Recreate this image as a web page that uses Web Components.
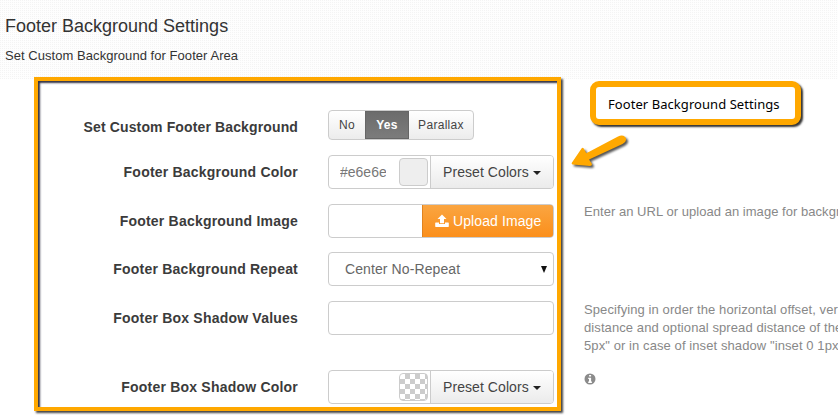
<!DOCTYPE html>
<html lang="en"><head><meta charset="utf-8"><title>Footer Background Settings</title>
<style>
html,body{margin:0;width:838px;height:415px;overflow:hidden;background:#fff;font-family:"Liberation Sans",Arial,sans-serif;color:#444}
body{position:relative}
</style></head><body>
<settings-page></settings-page>
<script>
const define=(name,html)=>{
  const t=document.createElement('template');t.innerHTML=html;
  customElements.define(name,class extends HTMLElement{
    constructor(){super();this.attachShadow({mode:'open'}).appendChild(t.content.cloneNode(true));}
  });
};
define('page-header',`<style>
:host{display:block;box-sizing:border-box;height:79px;padding:14px 0 0 5px;background:radial-gradient(circle at .5px .5px,#f4f4f4 .7px,transparent .8px) 0 2px/2px 2px,#fefefe}
h1{margin:0;font:400 18px/24px "Liberation Sans",Arial,sans-serif;color:#333;letter-spacing:0}
p{margin:8px 0 0;font-size:13px;line-height:20px;color:#333;letter-spacing:.05px}
</style><h1><slot name="title"></slot></h1><p><slot></slot></p>`);
define('setting-row',`<style>
:host{display:grid;grid-template-columns:298px 226px 1fr;grid-template-rows:34px;column-gap:30px;height:34px;align-items:center}
label{text-align:right;font-weight:700;font-size:14px;line-height:20px;color:#3b3b3b;letter-spacing:var(--label-track,.21px);white-space:nowrap;padding-top:var(--label-drop,0)}
.control{height:34px}
.help{align-self:start;white-space:nowrap;font-size:13px;line-height:18px;color:#888;letter-spacing:var(--help-track,.09px)}
</style><label><slot name="label"></slot></label><div class="control"><slot></slot></div><div class="help"><slot name="help"></slot></div>`);
define('button-group',`<style>
:host{display:inline-flex;box-sizing:border-box;height:30px;margin-top:2px;border:1px solid #ccc;border-radius:4px;overflow:hidden;background:linear-gradient(#fff,#ececec);font-size:12px;color:#444;vertical-align:top}
::slotted(span){display:flex;align-items:center;justify-content:center;width:36px;letter-spacing:.3px;padding-bottom:1px;box-sizing:border-box}
::slotted(.on){width:44px;background:linear-gradient(#6b6b6b,#7c7c7c);color:#fff;font-weight:700;box-shadow:inset 0 0 0 1px #666}
::slotted(.wide){width:64px}
</style><slot></slot>`);
define('field-box',`<style>
:host{display:flex;box-sizing:border-box;width:226px;height:34px;border:1px solid #ccc;border-radius:4px;background:#fff;align-items:center;overflow:hidden}
</style><slot></slot>`);
define('color-input',`<style>
:host{display:flex;box-sizing:border-box;width:101px;height:32px;padding:0 2px 0 11px;align-items:center;justify-content:space-between;font-size:14px;color:#777}
.v{width:46px;overflow:hidden;white-space:nowrap}
.s{box-sizing:border-box;width:29px;height:28px;border:1px solid #ccc;border-radius:4px;background:var(--swatch,#eee)}
</style><span class="v"><slot></slot></span><span class="s"></span>`);
define('preset-button',`<style>
:host{display:flex;box-sizing:border-box;flex:1;height:32px;padding-left:12px;border-left:1px solid #ccc;align-items:center;background:linear-gradient(#fff,#ebebeb);font-size:14px;color:#444;white-space:nowrap;letter-spacing:.07px}
i{margin:1px 0 0 4px;border:4px solid transparent;border-top-color:#222;border-bottom:0}
</style><slot></slot><i></i>`);
define('upload-button',`<style>
:host{display:flex;box-sizing:border-box;width:132px;height:34px;margin:-1px -1px -1px auto;padding-left:12px;border:1px solid #e08320;border-radius:0 4px 4px 0;align-items:center;background:linear-gradient(#faa541,#fb8f1b);font-size:14px;color:#fff;white-space:nowrap;letter-spacing:.1px}
svg{margin-right:4px}
</style><svg width="14" height="14" viewBox="0 0 14 14" fill="#fff"><path d="M7 .5 11.5 5H9v4.2H5V5H2.5z"/><path d="M.8 8.5H4V10h6V8.500h3.200q.6 0 .6.6v3.200q0 .7-.6.7H.8q-.6 0-.6-.7V9.100q0-.6.6-.6z"/></svg><slot></slot>`);
define('select-value',`<style>
:host{display:flex;flex:1;padding:0 6px 0 16px;justify-content:space-between;align-items:center;font-size:14px;color:#666;letter-spacing:.1px}
i{border:3.500px solid transparent;border-top:7px solid #111;border-bottom:0}
</style><slot></slot><i></i>`);
define('info-icon',`<style>:host{display:block;height:12px}svg{display:block}</style>
<svg width="12" height="12" viewBox="0 0 12 12"><circle cx="6" cy="6" r="5.500" fill="#8b8b8b"/><path fill="#fff" d="M5.100 2h2v1.600h-2zM4.200 4.700h2.900v3.800h.8V10H4.200V8.500H5V6.100h-.8z"/></svg>`);
define('highlight-frame',`<style>
:host{position:absolute;left:34px;top:77px;box-sizing:border-box;width:527px;height:334px;border:4px solid #ffa800;box-shadow:2px 2px 2px #444,inset 2px 2px 2px #334;pointer-events:none}
</style>`);
define('call-out',`<style>
:host{position:absolute;left:590px;top:81px;box-sizing:border-box;width:211px;height:44px;border:6px solid #ffa800;border-radius:9px;background:#fff;box-shadow:2px 2px 2px #333;padding:1px 0 0 12px;display:flex;align-items:center;font:13px "Noto Sans","Open Sans",sans-serif;color:#000;white-space:nowrap;letter-spacing:.06px}
</style><slot></slot>`);
define('pointer-arrow',`<style>
:host{position:absolute;left:568px;top:130px}svg{display:block;overflow:visible}path{filter:drop-shadow(2px 2px 1px #555)}
</style><svg width="64" height="42" viewBox="0 0 64 42"><path fill="#ffa800" d="M4 32.500 13.700 18.200Q15 17 16 19L18.300 23.300 50 6.500C54.500 4 58.500 6.500 58 10Q57.800 12.500 54.500 14L21 29.600 24 34Q24 36 22 36L5 34.500Q3 34 4 32.500z"/></svg>`);
define('settings-page',`<style>
:host{display:block}
.rows{display:flex;flex-direction:column}
.r1{margin-top:29px;--label-drop:4px;--label-track:.13px}.r2{margin-top:13px}.r3{margin-top:15px;--help-track:.04px}.r4{margin-top:14px}.r5{margin-top:15px}.r6{margin-top:35px}
.r2 color-input{--swatch:#eee}
.r6 color-input{--swatch:repeating-conic-gradient(#ccc 0 25%,#fff 0 50%) 0 0/10px 10px}
.h{display:block;margin-top:-1px}
.r5 .h{margin-top:0}
info-icon{margin-top:3px}
</style>
<page-header><span slot="title">Footer Background Settings</span>Set Custom Background for Footer Area</page-header>
<div class="rows">
<setting-row class="r1"><span slot="label">Set Custom Footer Background</span><button-group><span>No</span><span class="on">Yes</span><span class="wide">Parallax</span></button-group></setting-row>
<setting-row class="r2"><span slot="label">Footer Background Color</span><field-box><color-input>#e6e6e6</color-input><preset-button>Preset Colors</preset-button></field-box></setting-row>
<setting-row class="r3"><span slot="label">Footer Background Image</span><field-box><upload-button>Upload Image</upload-button></field-box><span slot="help" class="h">Enter an URL or upload an image for backgr</span></setting-row>
<setting-row class="r4"><span slot="label">Footer Background Repeat</span><field-box><select-value>Center No-Repeat</select-value></field-box></setting-row>
<setting-row class="r5"><span slot="label">Footer Box Shadow Values</span><field-box></field-box><span slot="help" class="h">Specifying in order the horizontal offset, ver<br>distance and optional spread distance of the<br>5px" or in case of inset shadow "inset 0 1px</span></setting-row>
<setting-row class="r6"><span slot="label">Footer Box Shadow Color</span><field-box><color-input></color-input><preset-button>Preset Colors</preset-button></field-box><info-icon slot="help"></info-icon></setting-row>
</div>
<highlight-frame></highlight-frame><call-out>Footer Background Settings</call-out><pointer-arrow></pointer-arrow>`);
</script></body></html>
